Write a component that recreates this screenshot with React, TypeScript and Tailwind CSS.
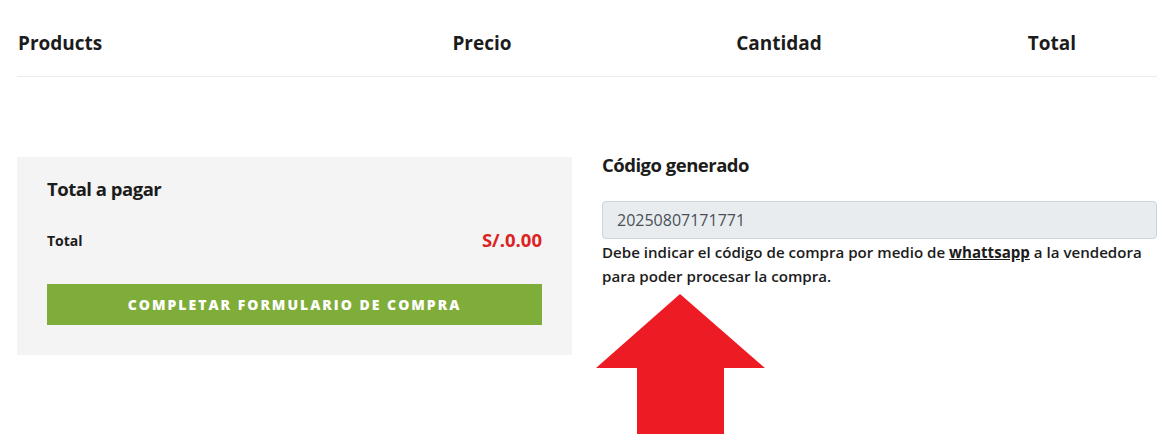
export default function App() {
  const sans = { fontFamily: '"Open Sans", "Noto Sans", Arial, sans-serif' };
  return (
    <div className="relative h-[434px] w-[1168px] overflow-hidden bg-white text-[#1c1c1c]" style={sans}>
      <div className="ml-[17px] w-[1140px]">
        {/* table head */}
        <div className="grid grid-cols-[316px_298px_296px_1fr] border-b border-[#ebebeb] pt-[30px] pb-[20px] text-[19px] font-bold leading-[26px]">
          <div className="pl-[1px]">Products</div>
          <div className="text-center">Precio</div>
          <div className="text-center">Cantidad</div>
          <div className="pl-[20px] text-center">Total</div>
        </div>

        <div className="mt-[80px] grid grid-cols-2 gap-[30px]">
          {/* checkout card */}
          <div className="bg-[#f4f4f4] px-[30px] pt-[19px] pb-[30px]">
            <h5 className="text-[18.5px] font-bold leading-[26px] tracking-[-0.5px]">Total a pagar</h5>
            <div className="mt-[24px] flex h-[28px] items-center justify-between">
              <span className="text-[14px] font-bold">Total</span>
              <span className="text-[18.5px] font-bold text-[#dd2222]">S/.0.00</span>
            </div>
            <button className="mt-[30px] block h-[41px] w-full bg-[#7fad39] text-[14px] font-extrabold uppercase tracking-[2px] text-white">
              Completar formulario de compra
            </button>
          </div>

          {/* generated code */}
          <div className="-mt-[4px]">
            <h5 className="text-[18.5px] font-bold leading-[24px] tracking-[-0.5px]">Código generado</h5>
            <input
              readOnly
              value="20250807171771"
              className="mt-[24px] block h-[38px] w-full rounded-[4px] border border-[#ced4da] bg-[#e9ecef] px-[14px] text-[16px] text-[#495057] outline-none"
            />
            <p className="mt-[1px] text-[15.1px] font-semibold leading-[24px]">
              Debe indicar el código de compra por medio de{" "}
              <a href="#" className="font-bold underline">whattsapp</a> a la vendedora para poder procesar la
              compra.
            </p>
          </div>
        </div>
      </div>

      {/* annotation arrow */}
      <svg className="absolute left-0 top-0" width="1168" height="434" viewBox="0 0 1168 434">
        <polygon points="680,294 765,368 724,368 724,434 637,434 637,368 596,368" fill="#ed1c24" />
      </svg>
    </div>
  );
}
